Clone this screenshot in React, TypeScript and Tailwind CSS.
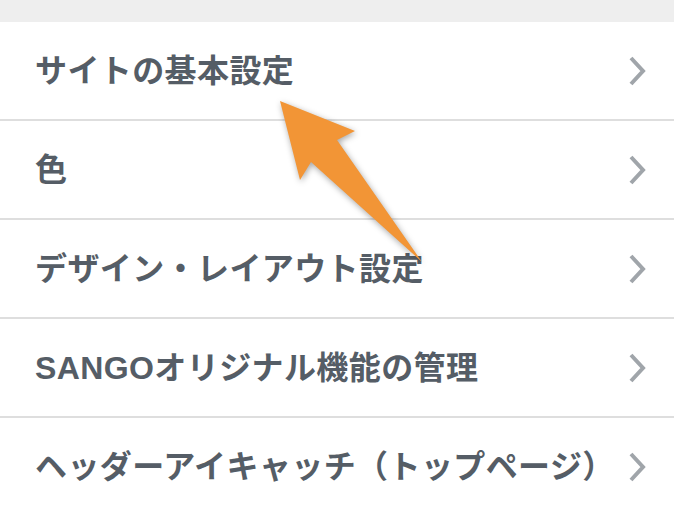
import React from "react";

const items = [
  "サイトの基本設定",
  "色",
  "デザイン・レイアウト設定",
  "SANGOオリジナル機能の管理",
  "ヘッダーアイキャッチ（トップページ）",
];

function Chevron() {
  return (
    <svg width="20" height="32" viewBox="0 0 20 32" className="shrink-0">
      <polyline
        points="4,3 16,16 4,29"
        fill="none"
        stroke="#a0a5aa"
        strokeWidth="4"
        strokeLinejoin="miter"
      />
    </svg>
  );
}

export default function App() {
  return (
    <div
      className="relative w-[674px] h-[510px] overflow-hidden bg-white"
      style={{ fontFamily: '"Liberation Sans", "Noto Sans CJK JP", sans-serif' }}
    >
      <div className="h-[22px] bg-[#eeeeee]" />
      <ul>
        {items.map((t) => (
          <li
            key={t}
            className="flex h-[99px] items-center justify-between border-b-2 border-[#dedede] pl-[35px] pr-[27px]"
          >
            <span className="whitespace-nowrap text-[32px] font-bold leading-none text-[#555d66] tracking-[0.4px]">
              {t}
            </span>
            <Chevron />
          </li>
        ))}
      </ul>
      <svg
        className="absolute left-0 top-0 pointer-events-none"
        width="674"
        height="510"
        viewBox="0 0 674 510"
        style={{ filter: "drop-shadow(1px 2px 3px rgba(0,0,0,0.35))" }}
      >
        <polygon
          points="280,101 355,131 337,140 422,262 311,162 300,180"
          fill="#f29536"
        />
      </svg>
    </div>
  );
}
